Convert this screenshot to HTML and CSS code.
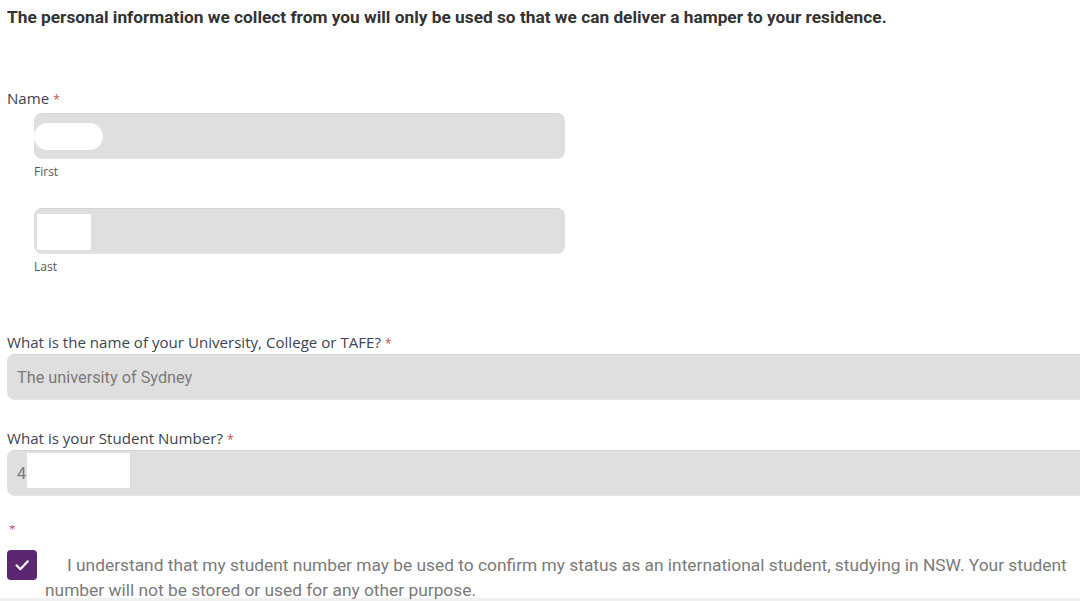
FILE: index.html
```html
<!DOCTYPE html>
<html lang="en">
<head>
<meta charset="utf-8">
<title>Hamper form</title>
<link rel="stylesheet" href="styles.css">
</head>
<body>
<div class="page">
  <p class="intro">The personal information we collect from you will only be used so that we can deliver a hamper to your residence.</p>

  <div class="field name-field">
    <div class="label">Name <span class="req">*</span></div>
    <div class="sub">
      <div class="input short"><span class="mask mask-pill"></span></div>
      <div class="sublabel">First</div>
    </div>
    <div class="sub sub-last">
      <div class="input short"><span class="mask mask-box"></span></div>
      <div class="sublabel">Last</div>
    </div>
  </div>

  <div class="field uni-field">
    <div class="label">What is the name of your University, College or TAFE? <span class="req">*</span></div>
    <div class="input wide"><span class="value">The university of Sydney</span></div>
  </div>

  <div class="field num-field">
    <div class="label">What is your Student Number? <span class="req">*</span></div>
    <div class="input wide"><span class="value">4</span><span class="mask mask-num"></span></div>
  </div>

  <div class="consent">
    <div class="req req-solo">*</div>
    <div class="consent-row">
      <span class="checkbox">
        <svg viewBox="0 0 30 30" width="30" height="30"><path d="M9.5 15.3 L13.4 19.2 L20.8 11.3" fill="none" stroke="#fff" stroke-width="2.2" stroke-linecap="round" stroke-linejoin="round"/></svg>
      </span>
      <p class="consent-text">I understand that my student number may be used to confirm my status as an international student, studying in NSW. Your student number will not be stored or used for any other purpose.</p>
    </div>
  </div>
  <div class="bottom-strip"></div>
</div>
</body>
</html>
```

FILE: styles.css
```css
html, body {
  margin: 0;
  padding: 0;
  background: #fff;
  overflow: hidden;
}
.page {
  padding-left: 7px;
  width: 1073px;
}
.intro {
  margin: 7px 0 0;
  font-family: Roboto, "Liberation Sans", sans-serif;
  font-weight: 700;
  font-size: 17.3px;
  line-height: 20px;
  color: #333;
}
.label {
  font-family: "Open Sans", "Liberation Sans", sans-serif;
  font-size: 15.1px;
  line-height: 20px;
  height: 20px;
  color: #3d4452;
}
.req {
  color: #c0504d;
  font-size: 12px;
  line-height: 0;
}
.name-field {
  margin-top: 61px;
}
.name-field .label {
  margin-bottom: 5px;
}
.sub {
  margin-left: 27px;
}
.sub-last {
  margin-top: 28px;
}
.input {
  box-sizing: border-box;
  height: 46px;
  background: #dfdfdf;
  border-top: 1px solid #d5d5d5;
  border-bottom: 1px solid #e6e6e6;
  border-radius: 8px;
  display: flex;
  align-items: center;
}
.short {
  width: 531px;
}
.wide {
  width: 1120px;
  padding-left: 10px;
  margin-top: 2px;
}
.sublabel {
  margin-top: 5px;
  font-family: "Open Sans", "Liberation Sans", sans-serif;
  font-size: 12px;
  line-height: 16px;
  color: #555;
}
.mask {
  display: block;
  background: #fff;
}
.mask-pill {
  width: 69px;
  height: 27px;
  border-radius: 14px;
  margin-top: 1px;
}
.mask-box {
  width: 54px;
  height: 36px;
  margin-left: 3px;
  margin-top: 2px;
}
.mask-num {
  width: 103px;
  height: 35px;
  margin-left: 1px;
  align-self: flex-start;
  margin-top: 2px;
}
.value {
  font-family: Roboto, "Liberation Sans", sans-serif;
  font-size: 16.3px;
  color: #7a7a7a;
}
.uni-field {
  margin-top: 57px;
}
.num-field {
  margin-top: 28px;
}
.consent {
  margin-top: 25px;
  height: 77px;
}
.req-solo {
  display: block;
  margin-left: 2px;
  line-height: 16px;
  height: 16px;
  font-size: 13px;
}
.consent-row {
  margin-top: 13px;
  display: flex;
  align-items: flex-start;
  gap: 8px;
}
.checkbox {
  flex: none;
  width: 30px;
  height: 30px;
  border-radius: 4px;
  background: #5c2670;
  display: block;
}
.checkbox svg {
  display: block;
}
.consent-text {
  margin: 3px 0 0;
  text-indent: 22px;
  font-family: Roboto, "Liberation Sans", sans-serif;
  font-size: 17.35px;
  line-height: 25px;
  color: #7a7a7a;
}
.bottom-strip {
  height: 10px;
  margin-left: -7px;
  width: 1080px;
  background: #f0f0f0;
}
```
